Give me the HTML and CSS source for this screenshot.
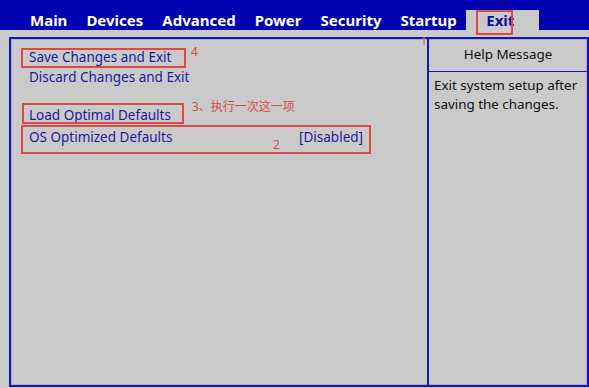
FILE: index.html
```html
<!DOCTYPE html>
<html lang="en">
<head>
    <meta charset="UTF-8">
    <title>BIOS Exit</title>
    <link rel="stylesheet" href="styles.css">
</head>
<body>

<div class="screen">
    <header class="topbar">
        <span class="tab">Main</span>
        <span class="tab">Devices</span>
        <span class="tab">Advanced</span>
        <span class="tab">Power</span>
        <span class="tab">Security</span>
        <span class="tab">Startup</span>
        <span class="tab active">Exit</span>
    </header>

    <div class="frame">
        <div class="options">
            <div class="option">Save Changes and Exit</div>
            <div class="option">Discard Changes and Exit</div>
            <div class="option gap">Load Optimal Defaults</div>
            <div class="option row">
                <span>OS Optimized Defaults</span>
                <span class="value">[Disabled]</span>
            </div>
        </div>
        <div class="help">
            <div class="help-title">Help Message</div>
            <div class="help-text">Exit system setup after saving the changes.</div>
        </div>
    </div>

    <!-- red annotations drawn over the screenshot -->
    <div class="mark box-exit"></div>
    <div class="mark box-save"></div>
    <div class="mark box-load"></div>
    <div class="mark box-os"></div>
    <span class="note n1">1</span>
    <span class="note n2">2</span>
    <span class="note n3">3、执行一次这一项</span>
    <span class="note n4">4</span>
</div>

</body>
</html>
```

FILE: styles.css
```css
body {
    margin: 0;
    padding: 0;
    background-color: #cacaca;
    font-family: "Noto Sans", "Open Sans", sans-serif;
}

.screen {
    position: relative;
    width: 589px;
    height: 388px;
    overflow: hidden;
}

.topbar {
    height: 30px;
    background-color: #0000b0;
    display: flex;
    align-items: flex-end;
    padding-left: 20.5px;
}

.tab {
    color: #ffffff;
    font-weight: bold;
    font-size: 15px;
    line-height: 20px;
    height: 20px;
    padding: 0 9.5px;
}

.tab.active {
    background-color: #cacaca;
    color: #0c0cb0;
    padding: 0 25px 0 20px;
    margin-left: 0;
}

.frame {
    margin: 7px 0 0 9px;
    height: 346px;
    border: 2px solid #1818a8;
    box-shadow: inset 0 0 0 1px #a8a8e0;
    display: flex;
}

.options {
    flex: 1;
    padding: 8px 0 0 18px;
    border-right: 2px solid #1818a8;
    color: #1a1aa0;
    font-size: 13.5px;
}

.option {
    height: 20px;
    line-height: 20px;
}

.option.gap {
    margin-top: 18px;
}

.option.row {
    margin-top: 2px;
    display: flex;
    width: 334px;
    justify-content: space-between;
}

.help {
    width: 158px;
    color: #111111;
    font-size: 13.4px;
}

.help-title {
    text-align: center;
    height: 32px;
    line-height: 30px;
    border-bottom: 1px solid #1818a8;
}

.help-text {
    padding: 4px 4px 0 5px;
    line-height: 19px;
}

.mark {
    position: absolute;
    border: 2px solid #e04848;
}

.box-exit { left: 476px; top: 10px; width: 33px; height: 21px; }
.box-save { left: 21px; top: 48px; width: 161px; height: 16px; }
.box-load { left: 22px; top: 103px; width: 158px; height: 17px; }
.box-os   { left: 21px; top: 125px; width: 346px; height: 25px; }

.note {
    position: absolute;
    color: #e04848;
    font-family: "Noto Sans", "Noto Sans CJK SC", sans-serif;
    font-size: 12px;
    line-height: 14px;
}

.n1 { left: 421px; top: 34px; font-size: 10px; }
.n2 { left: 273px; top: 138px; }
.n3 { left: 192px; top: 100px; }
.n4 { left: 191px; top: 45px; }
```
